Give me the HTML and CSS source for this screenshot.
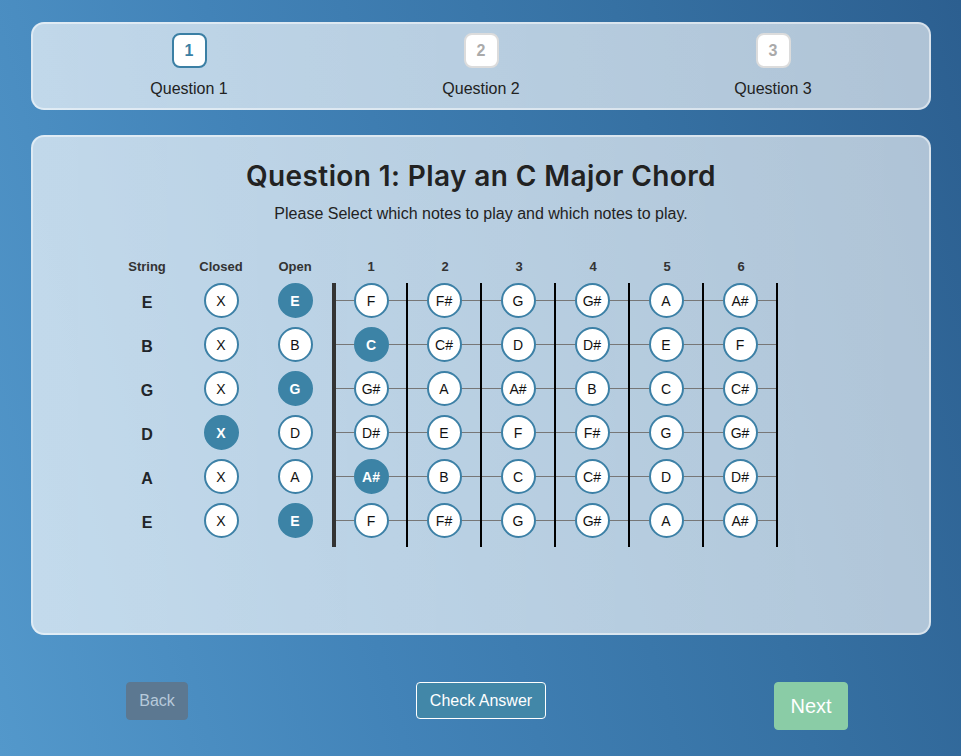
FILE: index.html
```html
<!DOCTYPE html>
<html>
<head>
<meta charset="utf-8">
<link rel="stylesheet" href="styles.css">
</head>
<body>
<div class="page">
  <div class="card steps">
    <div class="step active"><div class="step-num">1</div><div class="step-label">Question 1</div></div>
    <div class="step"><div class="step-num">2</div><div class="step-label">Question 2</div></div>
    <div class="step"><div class="step-num">3</div><div class="step-label">Question 3</div></div>
  </div>

  <div class="card main">
    <h1 class="title">Question 1: Play an C Major Chord</h1>
    <p class="subtitle">Please Select which notes to play and which notes to play.</p>

    <div class="board">
      <div class="row head">
        <div class="cell">String</div><div class="cell">Closed</div><div class="cell">Open</div>
        <div class="cell nutgap">1</div><div class="cell">2</div><div class="cell">3</div><div class="cell">4</div><div class="cell">5</div><div class="cell">6</div>
      </div>

      <div class="row">
        <div class="cell sname">E</div>
        <div class="cell"><span class="dot">X</span></div>
        <div class="cell"><span class="dot on">E</span></div>
        <div class="cell fret nut"><span class="dot">F</span></div>
        <div class="cell fret"><span class="dot">F#</span></div>
        <div class="cell fret"><span class="dot">G</span></div>
        <div class="cell fret"><span class="dot">G#</span></div>
        <div class="cell fret"><span class="dot">A</span></div>
        <div class="cell fret"><span class="dot">A#</span></div>
      </div>
      <div class="row">
        <div class="cell sname">B</div>
        <div class="cell"><span class="dot">X</span></div>
        <div class="cell"><span class="dot">B</span></div>
        <div class="cell fret nut"><span class="dot on">C</span></div>
        <div class="cell fret"><span class="dot">C#</span></div>
        <div class="cell fret"><span class="dot">D</span></div>
        <div class="cell fret"><span class="dot">D#</span></div>
        <div class="cell fret"><span class="dot">E</span></div>
        <div class="cell fret"><span class="dot">F</span></div>
      </div>
      <div class="row">
        <div class="cell sname">G</div>
        <div class="cell"><span class="dot">X</span></div>
        <div class="cell"><span class="dot on">G</span></div>
        <div class="cell fret nut"><span class="dot">G#</span></div>
        <div class="cell fret"><span class="dot">A</span></div>
        <div class="cell fret"><span class="dot">A#</span></div>
        <div class="cell fret"><span class="dot">B</span></div>
        <div class="cell fret"><span class="dot">C</span></div>
        <div class="cell fret"><span class="dot">C#</span></div>
      </div>
      <div class="row">
        <div class="cell sname">D</div>
        <div class="cell"><span class="dot on">X</span></div>
        <div class="cell"><span class="dot">D</span></div>
        <div class="cell fret nut"><span class="dot">D#</span></div>
        <div class="cell fret"><span class="dot">E</span></div>
        <div class="cell fret"><span class="dot">F</span></div>
        <div class="cell fret"><span class="dot">F#</span></div>
        <div class="cell fret"><span class="dot">G</span></div>
        <div class="cell fret"><span class="dot">G#</span></div>
      </div>
      <div class="row">
        <div class="cell sname">A</div>
        <div class="cell"><span class="dot">X</span></div>
        <div class="cell"><span class="dot">A</span></div>
        <div class="cell fret nut"><span class="dot on">A#</span></div>
        <div class="cell fret"><span class="dot">B</span></div>
        <div class="cell fret"><span class="dot">C</span></div>
        <div class="cell fret"><span class="dot">C#</span></div>
        <div class="cell fret"><span class="dot">D</span></div>
        <div class="cell fret"><span class="dot">D#</span></div>
      </div>
      <div class="row">
        <div class="cell sname">E</div>
        <div class="cell"><span class="dot">X</span></div>
        <div class="cell"><span class="dot on">E</span></div>
        <div class="cell fret nut"><span class="dot">F</span></div>
        <div class="cell fret"><span class="dot">F#</span></div>
        <div class="cell fret"><span class="dot">G</span></div>
        <div class="cell fret"><span class="dot">G#</span></div>
        <div class="cell fret"><span class="dot">A</span></div>
        <div class="cell fret"><span class="dot">A#</span></div>
      </div>
    </div>
  </div>

  <div class="actions">
    <div class="act-left"><button class="btn back">Back</button></div>
    <div class="act-mid"><button class="btn check">Check Answer</button></div>
    <div class="act-right"><button class="btn next">Next</button></div>
  </div>
</div>
</body>
</html>
```

FILE: styles.css
```css
* { box-sizing: border-box; }
html, body { margin: 0; padding: 0; }
body {
  width: 961px;
  height: 756px;
  overflow: hidden;
  background: linear-gradient(75deg, #5398cb 0%, #4283b8 35%, #3671a3 70%, #2c5f90 100%);
  font-family: "Liberation Sans", Arial, sans-serif;
  color: #212529;
}
.page {
  padding: 22px 30px 0 31px;
}
.card {
  background: linear-gradient(90deg, rgba(255,255,255,0.66), rgba(255,255,255,0.62));
  border: 2px solid rgba(255,255,255,0.5);
  border-radius: 13px;
}
.steps {
  height: 88px;
  display: grid;
  grid-template-columns: repeat(3, 1fr);
  padding: 0 10px;
}
.step {
  display: flex;
  flex-direction: column;
  align-items: center;
  padding-top: 9px;
}
.step-num {
  width: 35px;
  height: 35px;
  border-radius: 8px;
  background: #fff;
  border: 2px solid #dcdcdc;
  color: #aaa;
  font-weight: bold;
  font-size: 16px;
  display: flex;
  align-items: center;
  justify-content: center;
}
.step.active .step-num {
  border-color: #3b7fa4;
  color: #3b7fa4;
}
.step-label {
  margin-top: 12px;
  font-size: 16px;
  color: #222;
}
.main {
  margin-top: 25px;
  height: 500px;
  padding-top: 22px;
}
.title {
  margin: 0;
  text-align: center;
  font-family: Inter, "Open Sans", sans-serif;
  font-weight: 600;
  font-size: 28px;
  color: #222;
  letter-spacing: 0.4px;
}
.subtitle {
  margin: 12px 0 0;
  text-align: center;
  font-size: 16px;
  color: #222;
}
.board {
  margin: 34px 0 0 77px;
}
.row {
  display: flex;
  height: 44px;
}
.row.head {
  height: 26px;
  padding-top: 2px;
}
.cell {
  width: 74px;
  flex: none;
  display: flex;
  justify-content: center;
  align-items: flex-start;
  position: relative;
}
.head .cell {
  font-weight: bold;
  font-size: 13px;
  color: #333;
}
.head .nutgap {
  margin-left: 2px;
}
.sname {
  font-weight: bold;
  font-size: 16px;
  padding-top: 11px;
}
.cell.open-col { width: 73px; }
.fret {
  border-right: 2px solid #000;
  width: 74px;
}
.fret.nut {
  border-left: 4px solid #333;
  width: 76px;
}
.fret::before {
  content: "";
  position: absolute;
  left: 0;
  right: 0;
  top: 17px;
  height: 1px;
  background: #777;
}
.dot {
  position: relative;
  width: 35px;
  height: 35px;
  border-radius: 50%;
  background: #fff;
  border: 2px solid #3c80a6;
  display: flex;
  align-items: center;
  justify-content: center;
  font-size: 14px;
  color: #111;
}
.dot.on {
  background: #3c83a6;
  border-color: #3c83a6;
  color: #fff;
  font-weight: bold;
}
.actions {
  display: grid;
  grid-template-columns: 1fr 1fr 1fr;
  margin-top: 47px;
  padding: 0 83px 0 95px;
  align-items: start;
}
.act-left { justify-self: start; }
.act-mid { justify-self: center; margin-right: 12px; }
.act-right { justify-self: end; }
.btn {
  font-family: "Liberation Sans", Arial, sans-serif;
  border-radius: 4px;
  color: #fff;
  cursor: pointer;
}
.back {
  width: 62px;
  height: 38px;
  font-size: 16px;
  background: #5c7891;
  border: 1px solid #5c7891;
  color: #b7cadb;
}
.check {
  width: 130px;
  height: 37px;
  font-size: 16px;
  background: #4287a8;
  border: 1px solid #fff;
}
.next {
  width: 74px;
  height: 48px;
  font-size: 20px;
  background: #8acca6;
  border: 1px solid #8acca6;
}
```
